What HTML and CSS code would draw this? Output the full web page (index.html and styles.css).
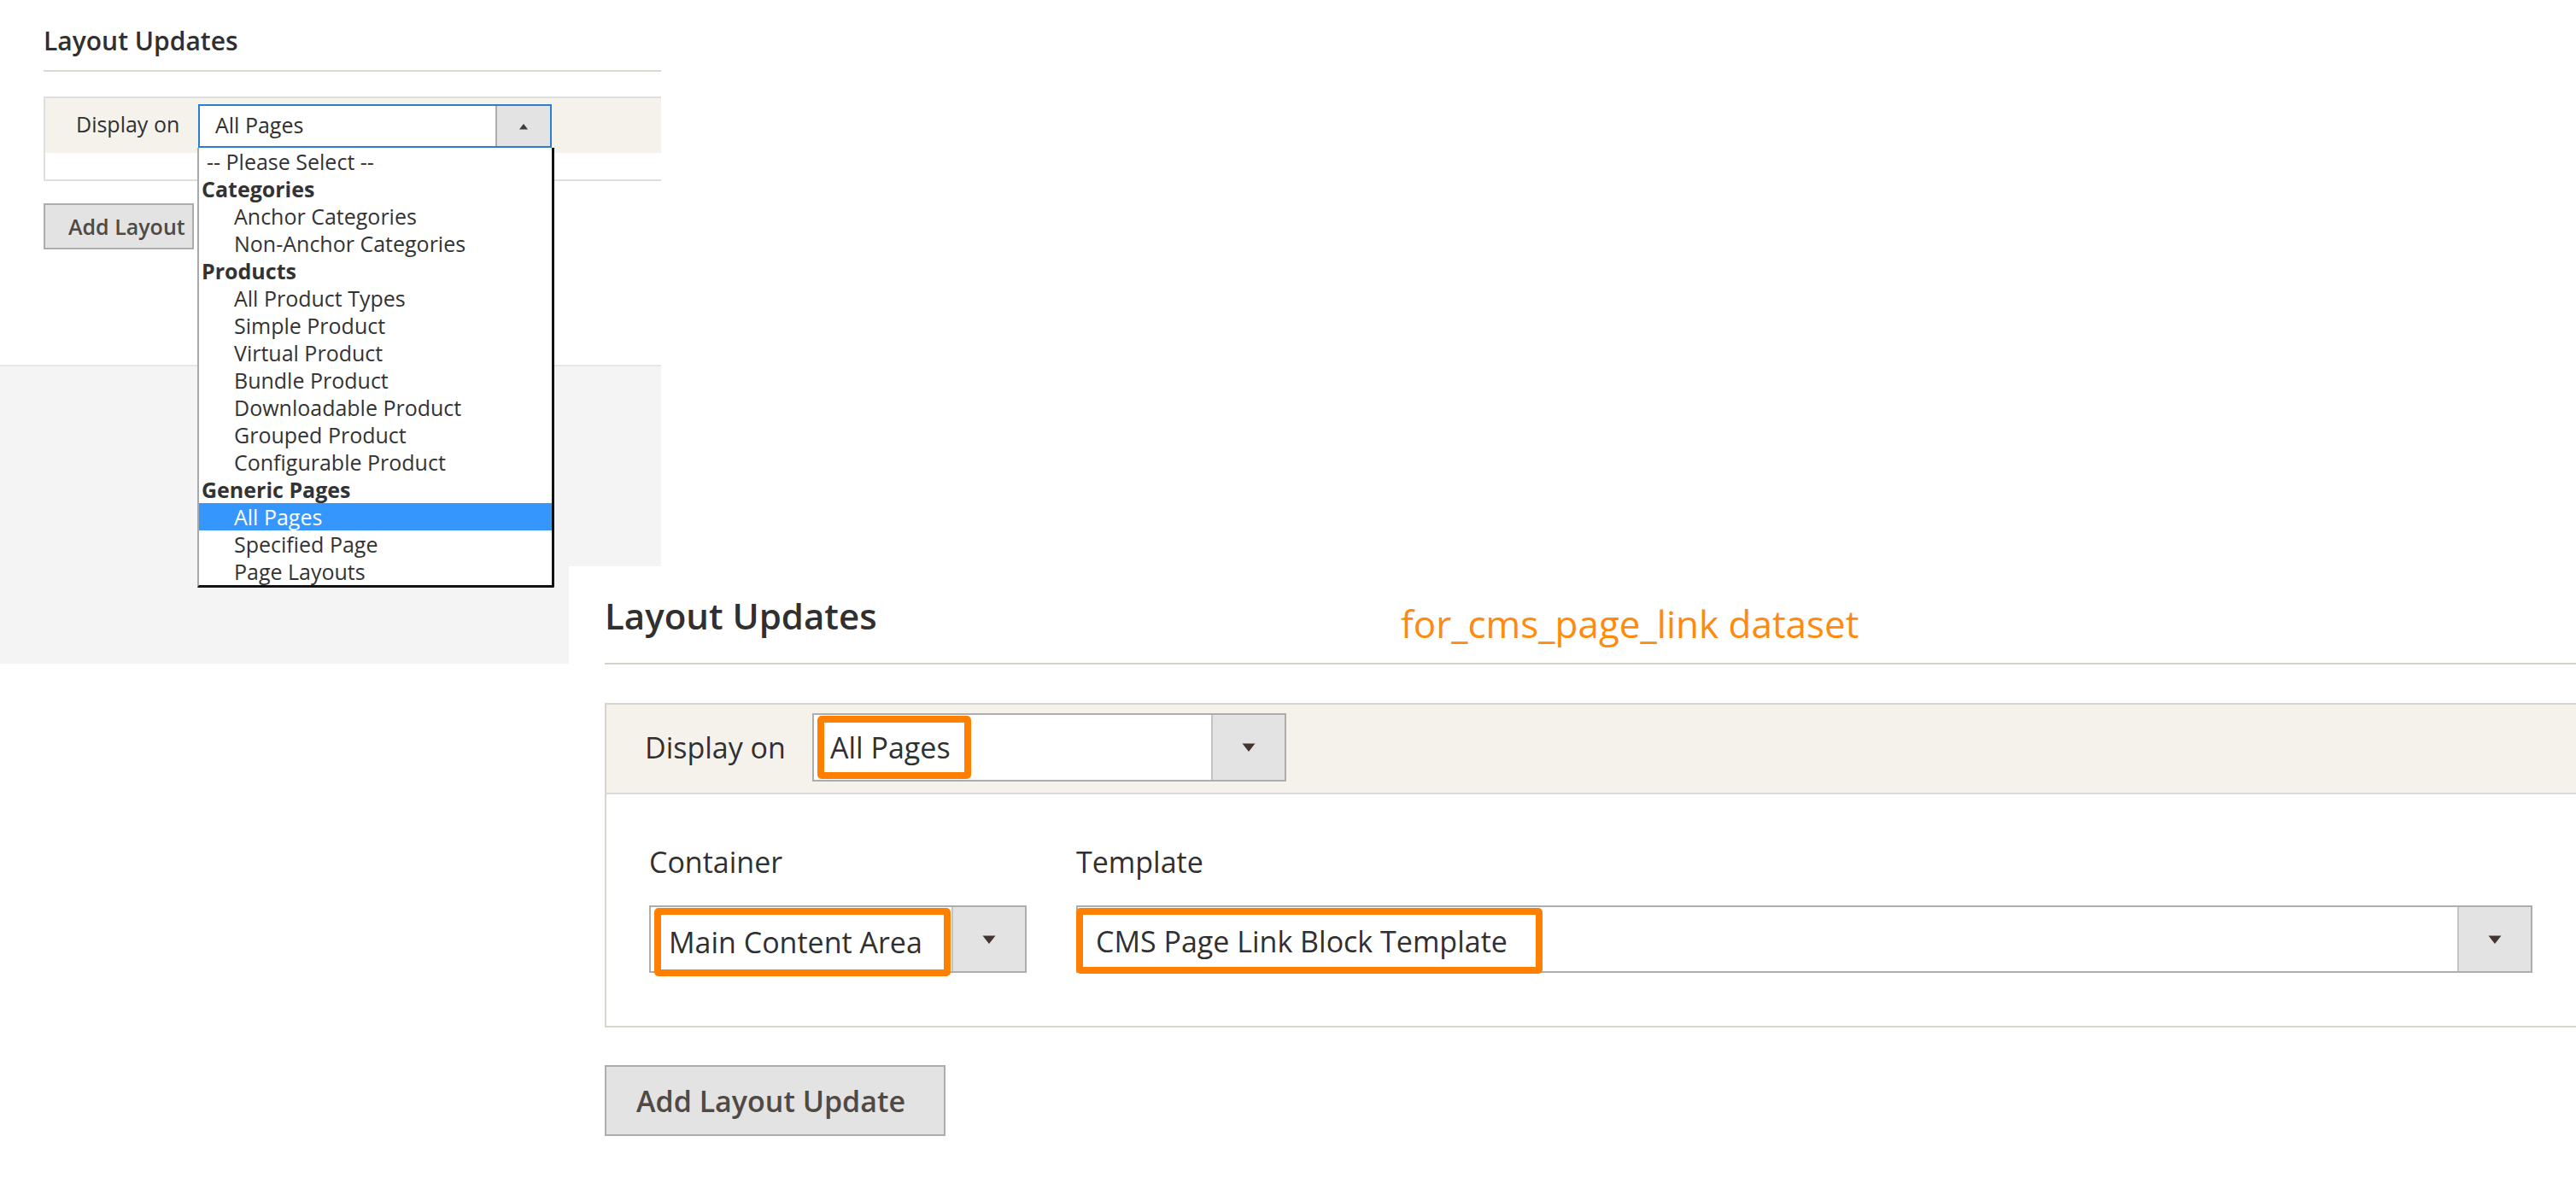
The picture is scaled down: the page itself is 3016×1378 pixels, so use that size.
FILE: index.html
```html
<!DOCTYPE html>
<html lang="en">
<head>
<meta charset="utf-8">
<title>Layout Updates</title>
<link rel="stylesheet" href="styles.css">
</head>
<body>
<div class="canvas">
  <section class="shot shot-old">
    <div class="old-main">
      <h2 class="old-title">Layout Updates</h2>
      <div class="old-box">
        <div class="old-head">
          <span class="old-label">Display on</span>
          <div class="old-select">
            <span class="old-value">All Pages</span>
            <span class="old-btn"><svg width="12" height="8" viewBox="0 0 12 8"><path d="M1 7.5h10L6 1z" fill="#3d3d3d"/></svg></span>
            <ul class="old-list">
              <li class="opt-ph">-- Please Select --</li>
              <li class="opt-group">Categories</li>
              <li class="opt">Anchor Categories</li>
              <li class="opt">Non-Anchor Categories</li>
              <li class="opt-group">Products</li>
              <li class="opt">All Product Types</li>
              <li class="opt">Simple Product</li>
              <li class="opt">Virtual Product</li>
              <li class="opt">Bundle Product</li>
              <li class="opt">Downloadable Product</li>
              <li class="opt">Grouped Product</li>
              <li class="opt">Configurable Product</li>
              <li class="opt-group">Generic Pages</li>
              <li class="opt is-selected">All Pages</li>
              <li class="opt">Specified Page</li>
              <li class="opt">Page Layouts</li>
            </ul>
          </div>
        </div>
        <div class="old-body"></div>
      </div>
      <button class="old-add" type="button"><span class="old-add-text">Add Layout Update</span></button>
    </div>
    <div class="old-footer"></div>
  </section>

  <section class="shot shot-new">
    <div class="new-title-row">
      <h2 class="new-title">Layout Updates</h2>
      <span class="note">for_cms_page_link dataset</span>
    </div>
    <div class="new-box">
      <div class="new-head">
        <span class="new-label">Display on</span>
        <div class="sel sel-display">
          <span class="sel-value"><span class="hl hl-display">All Pages</span></span>
          <span class="sel-btn"><svg width="18" height="12" viewBox="0 0 18 12"><path d="M1.5 1.5h15L9 11z" fill="#41362f"/></svg></span>
        </div>
      </div>
      <div class="new-body">
        <div class="field field-container">
          <span class="field-label">Container</span>
          <div class="sel">
            <span class="sel-value"><span class="hl hl-container">Main Content Area</span></span>
            <span class="sel-btn"><svg width="18" height="12" viewBox="0 0 18 12"><path d="M1.5 1.5h15L9 11z" fill="#41362f"/></svg></span>
          </div>
        </div>
        <div class="field field-template">
          <span class="field-label">Template</span>
          <div class="sel">
            <span class="sel-value"><span class="hl hl-template">CMS Page Link Block Template</span></span>
            <span class="sel-btn"><svg width="18" height="12" viewBox="0 0 18 12"><path d="M1.5 1.5h15L9 11z" fill="#41362f"/></svg></span>
          </div>
        </div>
      </div>
    </div>
    <button class="new-add" type="button">Add Layout Update</button>
  </section>
</div>
</body>
</html>
```

FILE: styles.css
```css
* { box-sizing: border-box; }

html, body {
  margin: 0;
  padding: 0;
  background: #ffffff;
}

body {
  width: 3016px;
  height: 1378px;
  overflow: hidden;
  font-family: "Open Sans", "Noto Sans", "DejaVu Sans", sans-serif;
  color: #303030;
}

.canvas {
  display: grid;
  grid-template-columns: 666px 108px 1fr;
  grid-template-rows: 663px 114px 1fr;
  width: 3016px;
  height: 1378px;
}

.shot {
  position: relative;
  overflow: hidden;
}

/* ---------- first (older) screenshot ---------- */
.shot-old {
  grid-column: 1 / 3;
  grid-row: 1 / 3;
  z-index: 1;
  display: flex;
  flex-direction: column;
  background: #ffffff;
}

.old-main {
  height: 427px;
  flex: 0 0 427px;
  padding-left: 51px;
  width: 1100px;
}

.old-title {
  margin: 0;
  padding-top: 27px;
  padding-bottom: 14px;
  font-size: 30px;
  line-height: 41px;
  font-weight: 600;
  color: #303030;
  border-bottom: 2px solid #dcd8d0;
}

.old-box {
  margin-top: 29px;
  border: 2px solid #dedede;
  width: 1000px;
}

.old-head {
  display: flex;
  align-items: center;
  background: #f5f2ec;
  padding: 7px 0 6px 36px;
}

.old-label {
  flex: 0 0 143px;
  font-size: 25px;
  line-height: 34px;
  margin-top: -6px;
  color: #303030;
}

.old-select {
  position: relative;
  display: flex;
  width: 414px;
  height: 51px;
  border: 2px solid #2b7fd0;
  background: #ffffff;
}

.old-value {
  flex: 1;
  padding-left: 18px;
  font-size: 25px;
  line-height: 45px;
  color: #303030;
}

.old-btn {
  width: 64px;
  display: flex;
  align-items: center;
  justify-content: center;
  background: #e3e3e3;
  border-left: 2px solid #adadad;
}

.old-list {
  position: absolute;
  top: calc(100% + 2px);
  left: -3px;
  width: 418px;
  margin: 0;
  padding: 0;
  list-style: none;
  background: #ffffff;
  border-left: 2px solid #a9a9a9;
  border-right: 3px solid #111111;
  border-bottom: 3px solid #111111;
  border-bottom-right-radius: 2px;
  z-index: 3;
}

.old-list li {
  height: 32px;
  font-size: 25px;
  line-height: 32px;
  white-space: nowrap;
  color: #333333;
}

.opt-ph { padding-left: 9px; }
.opt-group { padding-left: 3px; font-weight: 700; color: #262626; }
.opt { padding-left: 41px; }

.old-list .is-selected {
  background: #3596fe;
  color: #ffffff;
}

.old-body {
  height: 31px;
  background: #ffffff;
}

.old-add {
  display: block;
  margin-top: 26px;
  width: 176px;
  height: 54px;
  padding: 0 0 0 27px;
  overflow: hidden;
  font-family: inherit;
  font-size: 25px;
  font-weight: 600;
  color: #514943;
  background: #e3e3e3;
  border: 2px solid #adadad;
  white-space: nowrap;
  text-align: left;
}

.old-add-text {
  display: block;
  overflow: hidden;
  text-overflow: clip;
}

.old-footer {
  flex: 1;
  background: #f4f4f4;
  border-top: 2px solid #e6e6e6;
}

/* ---------- second (newer) screenshot ---------- */
.shot-new {
  grid-column: 2 / 4;
  grid-row: 2 / 4;
  z-index: 2;
  background: #ffffff;
  padding-left: 42px;
}

.new-title-row {
  position: relative;
  width: 2308px;
}

.new-title {
  margin: 0;
  padding-top: 29px;
  padding-bottom: 27px;
  font-size: 42px;
  line-height: 57px;
  font-weight: 600;
  color: #303030;
  border-bottom: 2px solid #d6d1c7;
}

.note {
  position: absolute;
  left: 932px;
  top: 37px;
  font-size: 44px;
  line-height: 60px;
  font-weight: 400;
  color: #ff8a0d;
  white-space: nowrap;
}

.new-box {
  margin-top: 45px;
  width: 2500px;
  border: 2px solid #d9d5cd;
}

.new-head {
  display: flex;
  align-items: center;
  background: #f5f2ec;
  padding: 10px 0 13px 45px;
  border-bottom: 2px solid #dbdbdb;
}

.new-label {
  flex: 0 0 196px;
  font-size: 34px;
  line-height: 46px;
  color: #303030;
}

.sel {
  display: flex;
  height: 79px;
  border: 2px solid #adadad;
  background: #ffffff;
}

.sel-display {
  width: 555px;
  height: 80px;
}

.sel-value {
  flex: 1;
  display: flex;
  align-items: flex-start;
}

.sel-btn {
  flex: 0 0 86px;
  display: flex;
  align-items: center;
  justify-content: center;
  background: #e3e3e3;
  border-left: 2px solid #c4c4c4;
}

.hl {
  display: flex;
  align-items: center;
  border: 8px solid #ff8000;
  border-radius: 5px;
  background: #ffffff;
  font-size: 34px;
  color: #303030;
  white-space: nowrap;
  position: relative;
  z-index: 1;
}

.hl-display {
  margin: 1px 0 0 4px;
  height: 74px;
  padding: 0 16px 0 7px;
}

.hl-container {
  margin: 1px 0 0 4px;
  height: 80px;
  width: 347px;
  padding-left: 9px;
}

.hl-template {
  margin: 1px 0 0 -2px;
  height: 77px;
  width: 546px;
  padding-left: 15px;
}

.new-body {
  display: flex;
  gap: 58px;
  padding: 56px 0 62px 50px;
}

.field {
  display: flex;
  flex-direction: column;
  gap: 28px;
}

.field-container { flex: 0 0 442px; }
.field-template { flex: 0 0 1705px; }

.field-label {
  font-size: 34px;
  line-height: 46px;
  color: #303030;
}

.new-add {
  display: block;
  margin-top: 44px;
  width: 399px;
  height: 83px;
  padding: 0 0 0 35px;
  font-family: inherit;
  font-size: 34px;
  font-weight: 600;
  color: #514943;
  background: #e3e3e3;
  border: 2px solid #adadad;
  text-align: left;
  white-space: nowrap;
}
```
